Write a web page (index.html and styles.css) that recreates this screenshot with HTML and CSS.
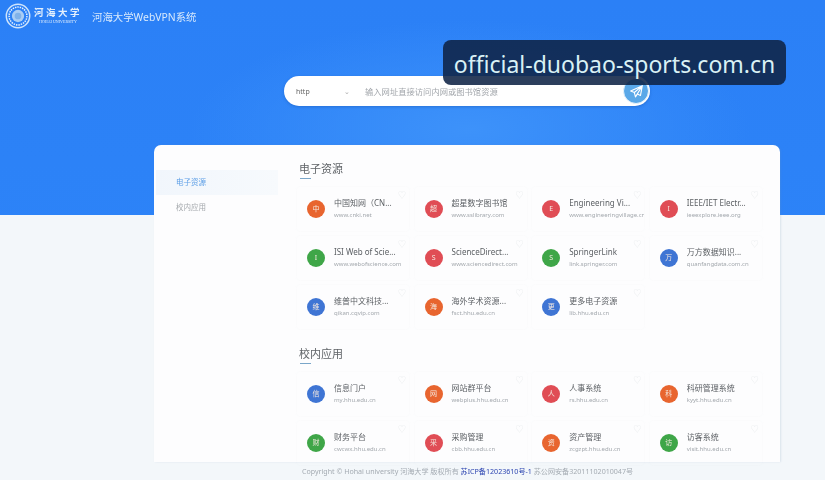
FILE: index.html
```html
<!DOCTYPE html>
<html lang="zh-CN">
<head>
    <meta charset="UTF-8">
    <meta name="viewport" content="width=device-width, initial-scale=1.0">
    <title>河海大学WebVPN系统</title>
    <link rel="stylesheet" href="styles.css">
</head>
<body>
    <div class="page">
        <header class="topbar">
            <svg class="seal" viewBox="0 0 28 28" width="26" height="26">
                <circle cx="14" cy="14" r="12.6" fill="none" stroke="#cfe4fb" stroke-width="1.6"/>
                <circle cx="14" cy="14" r="9.6" fill="none" stroke="#e6f1fd" stroke-width="1.6" stroke-dasharray="1.6 1"/>
                <circle cx="14" cy="14" r="6.6" fill="#a9cdf4"/>
                <circle cx="14" cy="14" r="3.6" fill="#7fb2ea"/>
            </svg>
            <div class="school">
                <div class="school-cn">河海大学</div>
                <div class="school-en">HOHAI UNIVERSITY</div>
            </div>
            <div class="system">河海大学WebVPN系统</div>
        </header>

        <div class="search">
            <span class="proto">http</span>
            <span class="arrow">⌄</span>
            <span class="hint">输入网址直接访问内网或图书馆资源</span>
            <span class="send">
                <svg viewBox="0 0 16 16" width="15" height="15">
                    <path d="M14.2 1.8 1.8 7.4l3.9 1.7 1.2 4.6 2.1-3 3.2 1.6z M5.700 9.100 14.200 1.800 6.900 13.700" fill="none" stroke="#fff" stroke-width="1.200" stroke-linejoin="round"/>
                </svg>
            </span>
        </div>

        <main class="panel">
            <aside class="side">
                <div class="side-item active">电子资源</div>
                <div class="side-item">校内应用</div>
            </aside>
            <div class="content">
                <h2 class="section-title">电子资源</h2>
                <div class="grid">
                    <div class="item"><span class="dot orange">中</span><div class="info"><div class="name">中国知网（CN...</div><div class="url">www.cnki.net</div></div><span class="fav">♡</span></div>
                    <div class="item"><span class="dot red">超</span><div class="info"><div class="name">超星数字图书馆</div><div class="url">www.sslibrary.com</div></div><span class="fav">♡</span></div>
                    <div class="item"><span class="dot red">E</span><div class="info"><div class="name">Engineering Vi...</div><div class="url">www.engineeringvillage.cn</div></div><span class="fav">♡</span></div>
                    <div class="item"><span class="dot red">I</span><div class="info"><div class="name">IEEE/IET Electr...</div><div class="url">ieeexplore.ieee.org</div></div><span class="fav">♡</span></div>
                    <div class="item"><span class="dot green">I</span><div class="info"><div class="name">ISI Web of Scie...</div><div class="url">www.webofscience.com</div></div><span class="fav">♡</span></div>
                    <div class="item"><span class="dot red">S</span><div class="info"><div class="name">ScienceDirect...</div><div class="url">www.sciencedirect.com</div></div><span class="fav">♡</span></div>
                    <div class="item"><span class="dot green">S</span><div class="info"><div class="name">SpringerLink</div><div class="url">link.springer.com</div></div><span class="fav">♡</span></div>
                    <div class="item"><span class="dot blue">万</span><div class="info"><div class="name">万方数据知识...</div><div class="url">quanfangdata.com.cn</div></div><span class="fav">♡</span></div>
                    <div class="item"><span class="dot blue">维</span><div class="info"><div class="name">维普中文科技...</div><div class="url">qikan.cqvip.com</div></div><span class="fav">♡</span></div>
                    <div class="item"><span class="dot orange">海</span><div class="info"><div class="name">海外学术资源...</div><div class="url">fsct.hhu.edu.cn</div></div><span class="fav">♡</span></div>
                    <div class="item"><span class="dot blue">更</span><div class="info"><div class="name">更多电子资源</div><div class="url">lib.hhu.edu.cn</div></div><span class="fav">♡</span></div>
                </div>

                <h2 class="section-title second">校内应用</h2>
                <div class="grid">
                    <div class="item"><span class="dot blue">信</span><div class="info"><div class="name">信息门户</div><div class="url">my.hhu.edu.cn</div></div><span class="fav">♡</span></div>
                    <div class="item"><span class="dot orange">网</span><div class="info"><div class="name">网站群平台</div><div class="url">webplus.hhu.edu.cn</div></div><span class="fav">♡</span></div>
                    <div class="item"><span class="dot red">人</span><div class="info"><div class="name">人事系统</div><div class="url">rs.hhu.edu.cn</div></div><span class="fav">♡</span></div>
                    <div class="item"><span class="dot orange">科</span><div class="info"><div class="name">科研管理系统</div><div class="url">kyyt.hhu.edu.cn</div></div><span class="fav">♡</span></div>
                    <div class="item"><span class="dot green">财</span><div class="info"><div class="name">财务平台</div><div class="url">cwcwx.hhu.edu.cn</div></div><span class="fav">♡</span></div>
                    <div class="item"><span class="dot red">采</span><div class="info"><div class="name">采购管理</div><div class="url">cbb.hhu.edu.cn</div></div><span class="fav">♡</span></div>
                    <div class="item"><span class="dot orange">资</span><div class="info"><div class="name">资产管理</div><div class="url">zcgzpt.hhu.edu.cn</div></div><span class="fav">♡</span></div>
                    <div class="item"><span class="dot green">访</span><div class="info"><div class="name">访客系统</div><div class="url">visit.hhu.edu.cn</div></div><span class="fav">♡</span></div>
                </div>
            </div>
        </main>

        <footer class="copyright">Copyright © Hohai university 河海大学 版权所有 <span class="icp">苏ICP备12023610号-1</span> 苏公网安备32011102010047号</footer>
    </div>

    <div class="watermark">official-duobao-sports.com.cn</div>
</body>
</html>
```

FILE: styles.css
```css
html, body {
    margin: 0;
    padding: 0;
    height: 480px;
    overflow: hidden;
    font-family: "Noto Sans", "Noto Sans CJK SC", sans-serif;
}

.page {
    height: 480px;
    overflow: hidden;
    filter: blur(0.5px);
    background:
        linear-gradient(to bottom, transparent 215px, #f3f7fa 215px),
        radial-gradient(ellipse 280px 110px at 470px 130px, #3d92fa, transparent),
        linear-gradient(to bottom, #2b80f6, #2e86f9);
}

.topbar {
    display: flex;
    align-items: center;
    height: 32px;
    padding-left: 5px;
    color: #e4f0fd;
}

.seal {
    margin-right: 3px;
}

.school {
    width: 48px;
    margin-right: 10px;
    text-align: center;
}

.school-cn {
    font-family: "Liberation Serif", "Noto Sans CJK SC", serif;
    font-size: 9.500px;
    font-weight: bold;
    letter-spacing: 2.500px;
    line-height: 12px;
    white-space: nowrap;
}

.school-en {
    font-family: "Liberation Serif", serif;
    font-size: 4px;
    line-height: 6px;
    white-space: nowrap;
}

.system {
    font-size: 10.400px;
    color: #d8e9fc;
}

.search {
    display: flex;
    align-items: center;
    width: 366px;
    height: 30px;
    margin: 44px 0 0 284px;
    background: #fff;
    border-radius: 15px;
    box-shadow: 0 1px 3px rgba(20, 80, 170, 0.4);
}

.proto {
    width: 48px;
    padding-left: 12px;
    font-size: 7px;
    color: #666;
}

.arrow {
    width: 21px;
    font-size: 7px;
    line-height: 7px;
    color: #aaa;
}

.hint {
    flex: 1;
    font-size: 8.300px;
    color: #a2a6ab;
    white-space: nowrap;
}

.send {
    display: flex;
    align-items: center;
    justify-content: center;
    width: 24px;
    height: 24px;
    margin-right: 1px;
    background: #5aa8e8;
    border: 1px solid #e8f3fb;
    border-radius: 50%;
}

.panel {
    display: flex;
    width: 626px;
    height: 317px;
    margin: 39px 0 0 154px;
    background: #fdfdfe;
    border-radius: 7px 7px 0 0;
    box-shadow: 1px 0 2px rgba(120, 150, 180, 0.2);
}

.side {
    width: 124px;
    padding-top: 25px;
    box-sizing: border-box;
}

.side-item {
    height: 25px;
    margin-left: 2px;
    padding-left: 20px;
    font-size: 7.500px;
    line-height: 24px;
    color: #a5a9ad;
}

.side-item.active {
    color: #5d9fe6;
    background: linear-gradient(to right, #f1f6fc, #f7fafd);
}

.content {
    flex: 1;
    padding: 16px 13px 0 19px;
}

.section-title {
    position: relative;
    margin: 0 0 10px 2px;
    height: 16px;
    font-size: 11px;
    font-weight: 400;
    line-height: 16px;
    color: #5f6367;
}

.section-title::after {
    content: "";
    position: absolute;
    left: 1px;
    bottom: -2px;
    width: 11px;
    height: 1px;
    background: #7aa6c9;
}

.section-title.second {
    margin-top: 17px;
}

.grid {
    display: grid;
    grid-template-columns: repeat(4, 112px);
    grid-auto-rows: 44px;
    column-gap: 5.600px;
    row-gap: 5px;
}

.item {
    position: relative;
    display: flex;
    align-items: center;
    padding-left: 10px;
    overflow: hidden;
    border-radius: 3px;
    box-shadow: 0 0 2px rgba(200, 205, 215, 0.12);
}

.dot {
    flex: none;
    width: 18px;
    height: 18px;
    margin-right: 9px;
    border-radius: 50%;
    font-size: 7px;
    line-height: 18px;
    text-align: center;
    color: #f4e8df;
}

.orange { background: #e8652f; }
.red { background: #e04d55; }
.green { background: #3fa648; }
.blue { background: #3f75d4; }

.info {
    min-width: 0;
    margin-top: -1px;
}

.name {
    font-size: 8px;
    line-height: 12px;
    color: #5b5f63;
    white-space: nowrap;
}

.url {
    margin-top: 2px;
    font-size: 6px;
    line-height: 9px;
    color: #a3a8ad;
    white-space: nowrap;
}

.fav {
    position: absolute;
    top: 3px;
    right: 3px;
    font-size: 8px;
    line-height: 9px;
    color: #e8ebed;
}

.copyright {
    height: 18px;
    margin-left: 110px;
    font-size: 7.100px;
    line-height: 18px;
    text-align: center;
    color: #a4abb2;
}

.icp {
    color: #2b44b0;
}

.watermark {
    position: absolute;
    top: 40px;
    left: 443px;
    width: 343px;
    height: 45px;
    box-sizing: border-box;
    font-family: "Noto Sans", sans-serif;
    font-size: 23px;
    line-height: 49px;
    text-align: center;
    white-space: nowrap;
    color: #d9f1f5;
    background: rgba(15, 35, 70, 0.88);
    border-radius: 8px;
}
```
